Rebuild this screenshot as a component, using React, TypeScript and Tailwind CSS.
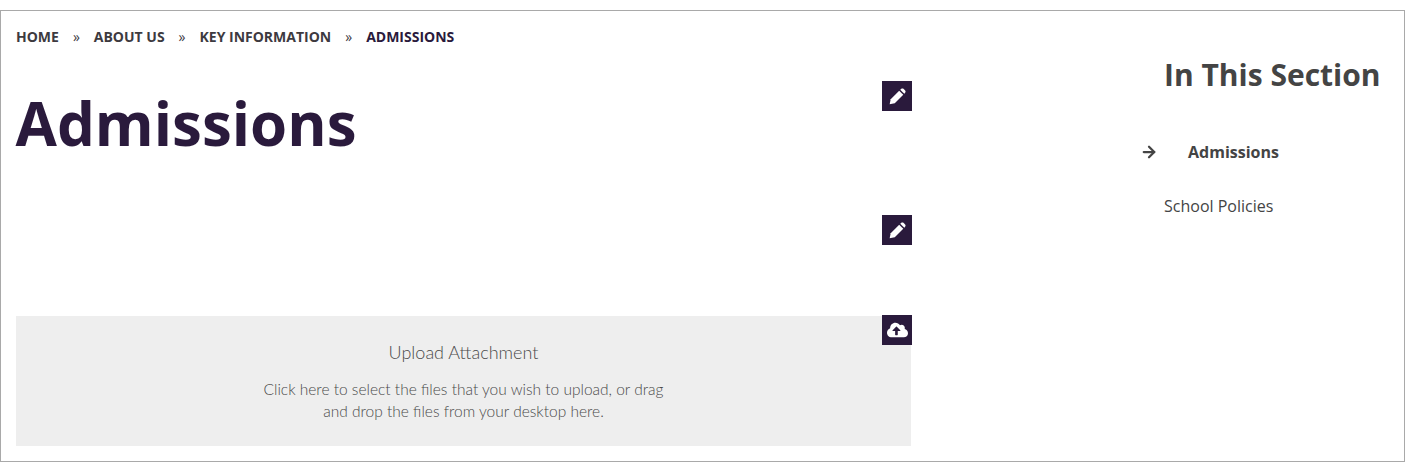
import { FaCloudUploadAlt } from 'react-icons/fa';
import { ArrowRight } from 'lucide-react';

const crumbs = ['HOME', 'ABOUT US', 'KEY INFORMATION'];

function EditButton({ top, children }: { top: string; children: React.ReactNode }) {
  return (
    <div className={`absolute left-[881px] ${top} flex h-[30px] w-[30px] items-center justify-center bg-[#2a1a3c] text-white`}>
      {children}
    </div>
  );
}

function Pencil() {
  return (
    <svg viewBox="0 0 16 16" className="h-[17px] w-[17px]" fill="currentColor">
      <path d="M0.6 15.4 L1.6 10.6 L9.6 2.6 L13.4 6.4 L5.4 14.4 Z" />
      <path d="M10.6 1.6 L11.6 0.8 C12.3 0.3 13 0.3 13.6 0.8 L15.2 2.4 C15.7 3 15.7 3.7 15.2 4.4 L14.4 5.4 Z" />
    </svg>
  );
}

export default function App() {
  return (
    <div className="bg-white pt-[10px] font-['Open_Sans',sans-serif]">
      <div className="relative flex h-[452px] border border-[#a9a9a9]">
        {/* Main column */}
        <div className="flex w-[910px] shrink-0 flex-col pl-[15px]">
          <nav className="mt-[16px] flex h-[20px] items-center text-[14px] font-bold leading-[20px] text-[#3d3a3f]">
            {crumbs.map(crumb => (
              <span key={crumb} className="flex items-center">
                <span>{crumb}</span>
                <span className="w-[34.9px] text-center font-normal">»</span>
              </span>
            ))}
            <span className="text-[#2a1a3c]">ADMISSIONS</span>
          </nav>
          <h1 className="ml-[-0.5px] mt-[36px] text-[60px] font-bold leading-[80px] text-[#2a1a3c]">Admissions</h1>
          <div className="mt-[153px] flex h-[130px] flex-col items-center bg-[#eeeeee] pt-[24px] font-['Lato',sans-serif] font-light text-[#4a4a4a]">
            <p className="text-[18px] leading-[24px]">Upload Attachment</p>
            <p className="mt-[14px] w-[410px] text-center text-[15.5px] leading-[22px]">
              Click here to select the files that you wish to upload, or drag and drop the files from your desktop here.
            </p>
          </div>
        </div>

        {/* Section nav */}
        <aside className="flex-1 pl-[253px] text-[#444444]">
          <h2 className="mt-[44px] whitespace-nowrap text-[30px] font-bold leading-[40px]">In This Section</h2>
          <div className="relative mt-[45px] pl-[24px] text-[16px] font-bold leading-[24px]">
            <ArrowRight className="absolute left-[-24.5px] top-[3px] h-[18px] w-[18px]" strokeWidth={3} />
            Admissions
          </div>
          <div className="mt-[30px] text-[16px] leading-[24px]">School Policies</div>
        </aside>

        <EditButton top="top-[70px]">
          <Pencil />
        </EditButton>
        <EditButton top="top-[204px]">
          <Pencil />
        </EditButton>
        <EditButton top="top-[304px]">
          <FaCloudUploadAlt className="h-[20px] w-[21px]" />
        </EditButton>
      </div>
    </div>
  );
}
